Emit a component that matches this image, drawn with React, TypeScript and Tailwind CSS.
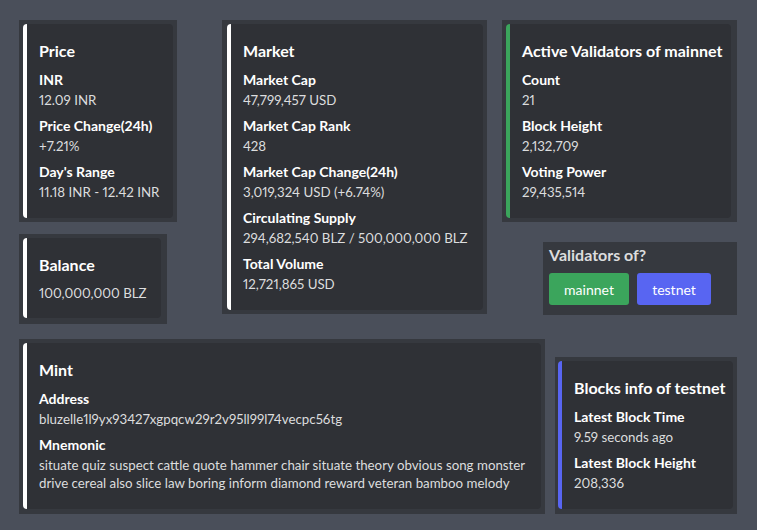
import React from 'react';

interface Field {
  name: string;
  value: React.ReactNode;
}

interface EmbedProps {
  title: string;
  fields?: Field[];
  description?: string;
  bar: string;
  outerClass: string;
  innerClass: string;
}

function Embed({ title, fields, description, bar, outerClass, innerClass }: EmbedProps) {
  return (
    <div className={`bg-[#36393f] ${outerClass}`}>
      <div className={`rounded-[4px] border-l-4 bg-[#2f3136] pt-4 pb-4 pl-3 pr-4 ${bar} ${innerClass}`}>
        <div className="text-[16px] leading-[22px] font-bold text-white whitespace-nowrap">{title}</div>
        {description && (
          <div className="mt-2 text-[13.3px] leading-[18px] text-[#dcddde] whitespace-nowrap proportional-nums">
            {description}
          </div>
        )}
        {fields && (
          <div className="mt-[9px] mb-[1px] flex flex-col gap-2">
            {fields.map((f) => (
              <div key={f.name}>
                <div className="mb-[2px] text-[14px] leading-[18px] font-bold text-white whitespace-nowrap">
                  {f.name}
                </div>
                <div className="text-[13.3px] leading-[18px] text-[#dcddde] whitespace-nowrap proportional-nums">
                  {f.value}
                </div>
              </div>
            ))}
          </div>
        )}
      </div>
    </div>
  );
}

export default function App() {
  return (
    <div
      className="min-h-screen w-full bg-[#4a4f5a] pt-5 pl-[19px] pr-5"
      style={{ fontFamily: 'Lato, "Noto Sans", sans-serif' }}
    >
      {/* Top row */}
      <div className="flex items-start">
        <div className="flex flex-col gap-3">
          <Embed
            title="Price"
            bar="border-white"
            outerClass="w-[158px] p-1"
            innerClass="w-[150px]"
            fields={[
              { name: 'INR', value: '12.09 INR' },
              { name: 'Price Change(24h)', value: '+7.21%' },
              { name: "Day's Range", value: '11.18 INR - 12.42 INR' },
            ]}
          />
          <Embed
            title="Balance"
            bar="border-white"
            outerClass="w-[148px] pt-1 pb-[6px] pl-1 pr-[6px]"
            innerClass="w-[138px]"
            description="100,000,000 BLZ"
          />
        </div>

        <Embed
          title="Market"
          bar="border-white"
          outerClass="ml-[45px] w-[265px] py-1 pl-[5px] pr-1"
          innerClass="w-[256px]"
          fields={[
            { name: 'Market Cap', value: '47,799,457 USD' },
            { name: 'Market Cap Rank', value: '428' },
            { name: 'Market Cap Change(24h)', value: '3,019,324 USD (+6.74%)' },
            { name: 'Circulating Supply', value: '294,682,540 BLZ / 500,000,000 BLZ' },
            { name: 'Total Volume', value: '12,721,865 USD' },
          ]}
        />

        <div className="ml-[15px] flex flex-1 flex-col items-end gap-5">
          <Embed
            title="Active Validators of mainnet"
            bar="border-[#3ba55c]"
            outerClass="w-[235px] py-1 pl-1 pr-[6px]"
            innerClass="w-[225px]"
            fields={[
              { name: 'Count', value: '21' },
              { name: 'Block Height', value: '2,132,709' },
              { name: 'Voting Power', value: '29,435,514' },
            ]}
          />
          <div className="w-[194px] bg-[#36393f] pt-[3px] pb-[10px] pl-[6px]">
            <div className="text-[16px] leading-5 font-bold text-[#dcddde]">Validators of?</div>
            <div className="mt-2 flex gap-2">
              <button className="h-8 w-20 rounded-[3px] bg-[#3ba55c] text-[14px] text-white">
                mainnet
              </button>
              <button className="h-8 w-[74px] rounded-[3px] bg-[#5865f2] text-[14px] text-white">
                testnet
              </button>
            </div>
          </div>
        </div>
      </div>

      {/* Bottom row */}
      <div className="mt-[15px] flex items-end gap-[10px]">
        <Embed
          title="Mint"
          bar="border-white"
          outerClass="w-[526px] pt-1 pb-[5px] pl-1 pr-1"
          innerClass="w-[518px]"
          fields={[
            { name: 'Address', value: 'bluzelle1l9yx93427xgpqcw29r2v95ll99l74vecpc56tg' },
            {
              name: 'Mnemonic',
              value: (
                <>
                  situate quiz suspect cattle quote hammer chair situate theory obvious song monster
                  <br />
                  drive cereal also slice law boring inform diamond reward veteran bamboo melody
                </>
              ),
            },
          ]}
        />
        <Embed
          title="Blocks info of testnet"
          bar="border-[#5865f2]"
          outerClass="w-[182px] pt-1 pb-[5px] pl-[3px] pr-1"
          innerClass="w-[175px]"
          fields={[
            { name: 'Latest Block Time', value: '9.59 seconds ago' },
            { name: 'Latest Block Height', value: '208,336' },
          ]}
        />
      </div>
    </div>
  );
}
